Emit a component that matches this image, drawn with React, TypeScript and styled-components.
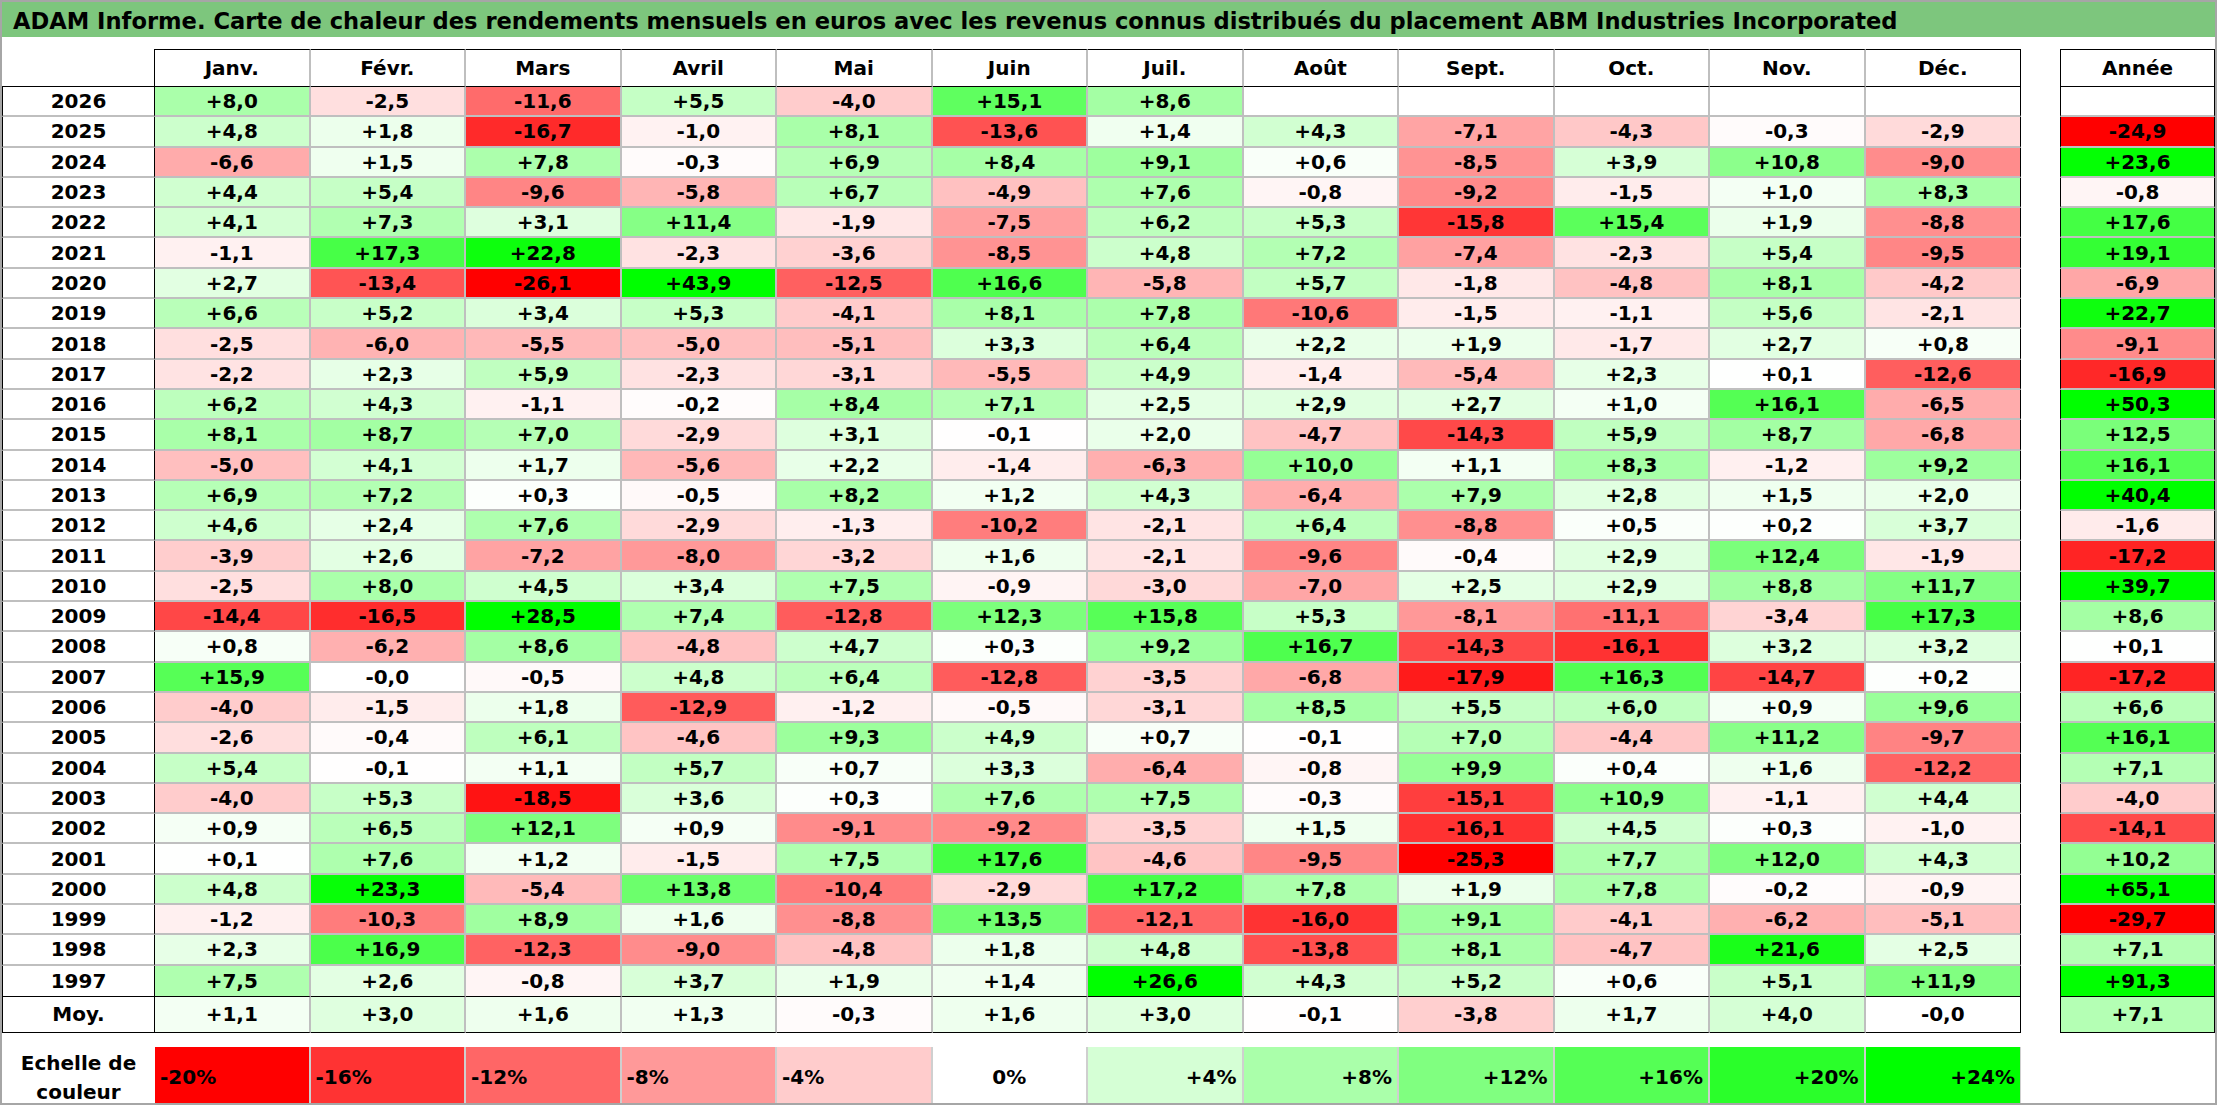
import React from 'react';
import styled, { createGlobalStyle, css } from 'styled-components';

const MONTHS = ['Janv.', 'Févr.', 'Mars', 'Avril', 'Mai', 'Juin', 'Juil.', 'Août', 'Sept.', 'Oct.', 'Nov.', 'Déc.'];

// year | 12 monthly returns ('.' = no data yet) | yearly return
const DATA = `
2026|+8,0 -2,5 -11,6 +5,5 -4,0 +15,1 +8,6 . . . . .|.
2025|+4,8 +1,8 -16,7 -1,0 +8,1 -13,6 +1,4 +4,3 -7,1 -4,3 -0,3 -2,9|-24,9
2024|-6,6 +1,5 +7,8 -0,3 +6,9 +8,4 +9,1 +0,6 -8,5 +3,9 +10,8 -9,0|+23,6
2023|+4,4 +5,4 -9,6 -5,8 +6,7 -4,9 +7,6 -0,8 -9,2 -1,5 +1,0 +8,3|-0,8
2022|+4,1 +7,3 +3,1 +11,4 -1,9 -7,5 +6,2 +5,3 -15,8 +15,4 +1,9 -8,8|+17,6
2021|-1,1 +17,3 +22,8 -2,3 -3,6 -8,5 +4,8 +7,2 -7,4 -2,3 +5,4 -9,5|+19,1
2020|+2,7 -13,4 -26,1 +43,9 -12,5 +16,6 -5,8 +5,7 -1,8 -4,8 +8,1 -4,2|-6,9
2019|+6,6 +5,2 +3,4 +5,3 -4,1 +8,1 +7,8 -10,6 -1,5 -1,1 +5,6 -2,1|+22,7
2018|-2,5 -6,0 -5,5 -5,0 -5,1 +3,3 +6,4 +2,2 +1,9 -1,7 +2,7 +0,8|-9,1
2017|-2,2 +2,3 +5,9 -2,3 -3,1 -5,5 +4,9 -1,4 -5,4 +2,3 +0,1 -12,6|-16,9
2016|+6,2 +4,3 -1,1 -0,2 +8,4 +7,1 +2,5 +2,9 +2,7 +1,0 +16,1 -6,5|+50,3
2015|+8,1 +8,7 +7,0 -2,9 +3,1 -0,1 +2,0 -4,7 -14,3 +5,9 +8,7 -6,8|+12,5
2014|-5,0 +4,1 +1,7 -5,6 +2,2 -1,4 -6,3 +10,0 +1,1 +8,3 -1,2 +9,2|+16,1
2013|+6,9 +7,2 +0,3 -0,5 +8,2 +1,2 +4,3 -6,4 +7,9 +2,8 +1,5 +2,0|+40,4
2012|+4,6 +2,4 +7,6 -2,9 -1,3 -10,2 -2,1 +6,4 -8,8 +0,5 +0,2 +3,7|-1,6
2011|-3,9 +2,6 -7,2 -8,0 -3,2 +1,6 -2,1 -9,6 -0,4 +2,9 +12,4 -1,9|-17,2
2010|-2,5 +8,0 +4,5 +3,4 +7,5 -0,9 -3,0 -7,0 +2,5 +2,9 +8,8 +11,7|+39,7
2009|-14,4 -16,5 +28,5 +7,4 -12,8 +12,3 +15,8 +5,3 -8,1 -11,1 -3,4 +17,3|+8,6
2008|+0,8 -6,2 +8,6 -4,8 +4,7 +0,3 +9,2 +16,7 -14,3 -16,1 +3,2 +3,2|+0,1
2007|+15,9 -0,0 -0,5 +4,8 +6,4 -12,8 -3,5 -6,8 -17,9 +16,3 -14,7 +0,2|-17,2
2006|-4,0 -1,5 +1,8 -12,9 -1,2 -0,5 -3,1 +8,5 +5,5 +6,0 +0,9 +9,6|+6,6
2005|-2,6 -0,4 +6,1 -4,6 +9,3 +4,9 +0,7 -0,1 +7,0 -4,4 +11,2 -9,7|+16,1
2004|+5,4 -0,1 +1,1 +5,7 +0,7 +3,3 -6,4 -0,8 +9,9 +0,4 +1,6 -12,2|+7,1
2003|-4,0 +5,3 -18,5 +3,6 +0,3 +7,6 +7,5 -0,3 -15,1 +10,9 -1,1 +4,4|-4,0
2002|+0,9 +6,5 +12,1 +0,9 -9,1 -9,2 -3,5 +1,5 -16,1 +4,5 +0,3 -1,0|-14,1
2001|+0,1 +7,6 +1,2 -1,5 +7,5 +17,6 -4,6 -9,5 -25,3 +7,7 +12,0 +4,3|+10,2
2000|+4,8 +23,3 -5,4 +13,8 -10,4 -2,9 +17,2 +7,8 +1,9 +7,8 -0,2 -0,9|+65,1
1999|-1,2 -10,3 +8,9 +1,6 -8,8 +13,5 -12,1 -16,0 +9,1 -4,1 -6,2 -5,1|-29,7
1998|+2,3 +16,9 -12,3 -9,0 -4,8 +1,8 +4,8 -13,8 +8,1 -4,7 +21,6 +2,5|+7,1
1997|+7,5 +2,6 -0,8 +3,7 +1,9 +1,4 +26,6 +4,3 +5,2 +0,6 +5,1 +11,9|+91,3
`;

const AVERAGE = {
  months: '+1,1 +3,0 +1,6 +1,3 -0,3 +1,6 +3,0 -0,1 -3,8 +1,7 +4,0 -0,0'.split(' '),
  year: '+7,1',
};

const SCALE = [-20, -16, -12, -8, -4, 0, 4, 8, 12, 16, 20, 24];

type Row = { year: string; months: string[]; total: string };

const rows: Row[] = DATA.trim()
  .split('\n')
  .map((line) => {
    const [year, months, total] = line.split('|');
    return {
      year,
      months: months.split(' ').map((m) => (m === '.' ? '' : m)),
      total: total === '.' ? '' : total,
    };
  });

// red below zero (full at -20), green above (full at +24)
const heatValue = (v: number) => {
  if (v < 0) {
    const c = Math.round(255 * (1 - Math.min(1, -v / 20)));
    return `rgb(255, ${c}, ${c})`;
  }
  const c = Math.round(255 * (1 - Math.min(1, v / 24)));
  return `rgb(${c}, 255, ${c})`;
};

const heat = (s: string) => (s ? heatValue(parseFloat(s.replace(',', '.'))) : '#ffffff');

const BLACK = '1px solid #000';
const GRAY = '2px solid #bfbfbf';

const GlobalStyle = createGlobalStyle`
  html, body {
    margin: 0;
    padding: 0;
    background: #fff;
  }
`;

const Page = styled.div`
  width: 2217px;
  height: 1105px;
  box-sizing: border-box;
  border: 2px solid #a6a6a6;
  font-family: 'DejaVu Sans', 'Liberation Sans', sans-serif;
  font-weight: 700;
  color: #000;
  display: flex;
  flex-direction: column;
  overflow: hidden;
`;

const TitleBar = styled.div`
  height: 35px;
  box-sizing: border-box;
  padding: 3px 0 0 11px;
  background: #7dc67d;
  display: flex;
  align-items: center;
  font-size: 22.6px;
  white-space: nowrap;
`;

const Body = styled.div`
  display: flex;
  gap: 39px;
  margin-top: 12px;
`;

const LeftBlock = styled.div`
  display: flex;
  flex-direction: column;
  gap: 14px;
`;

const MonthTable = styled.div`
  display: grid;
  grid-template-columns: 153px repeat(12, 155.5px);
  grid-template-rows: 38px repeat(30, 30.3px) 37px;
`;

const cellBase = css`
  box-sizing: border-box;
  display: flex;
  align-items: center;
  justify-content: center;
  font-size: 20px;
  white-space: nowrap;
`;

const Corner = styled.div`
  border-right: ${BLACK};
  border-bottom: ${BLACK};
`;

const HeadCell = styled.div<{ $end?: boolean }>`
  ${cellBase};
  background: #fff;
  border-top: ${BLACK};
  border-bottom: ${BLACK};
  border-right: ${({ $end }) => ($end ? BLACK : GRAY)};
`;

const YearCell = styled.div<{ $tail?: boolean; $avg?: boolean }>`
  ${cellBase};
  background: #fff;
  border-left: ${BLACK};
  border-right: ${BLACK};
  border-bottom: ${({ $tail }) => ($tail ? 'none' : GRAY)};
  ${({ $avg }) =>
    $avg &&
    css`
      border-top: ${BLACK};
      border-bottom: ${BLACK};
    `}
`;

const ValueCell = styled.div.attrs<{ $bg: string }>(({ $bg }) => ({
  style: { background: $bg },
}))<{ $bg: string; $end?: boolean; $tail?: boolean; $avg?: boolean }>`
  ${cellBase};
  border-right: ${({ $end }) => ($end ? BLACK : GRAY)};
  border-bottom: ${({ $tail }) => ($tail ? 'none' : GRAY)};
  ${({ $avg }) =>
    $avg &&
    css`
      border-top: ${BLACK};
      border-bottom: ${BLACK};
    `}
`;

const AnnualTable = styled.div`
  display: grid;
  grid-template-columns: 155px;
  grid-template-rows: 38px repeat(30, 30.3px) 37px;
  align-self: flex-start;
`;

const AnnualHead = styled.div`
  ${cellBase};
  background: #fff;
  border: ${BLACK};
`;

const AnnualCell = styled.div.attrs<{ $bg: string }>(({ $bg }) => ({
  style: { background: $bg },
}))<{ $bg: string; $tail?: boolean; $avg?: boolean }>`
  ${cellBase};
  border-left: ${BLACK};
  border-right: ${BLACK};
  border-bottom: ${({ $tail }) => ($tail ? 'none' : GRAY)};
  ${({ $avg }) =>
    $avg &&
    css`
      border-top: ${BLACK};
      border-bottom: ${BLACK};
    `}
`;

const ScaleRow = styled.div`
  display: grid;
  grid-template-columns: 153px repeat(12, 155.5px);
  height: 56px;
`;

const ScaleLabel = styled.div`
  display: flex;
  flex-direction: column;
  align-items: center;
  justify-content: center;
  font-size: 20px;
  line-height: 29px;
  padding-top: 2px;
`;

const ScaleCell = styled.div.attrs<{ $bg: string }>(({ $bg }) => ({
  style: { background: $bg },
}))<{ $bg: string; $align: 'flex-start' | 'center' | 'flex-end' }>`
  ${cellBase};
  justify-content: ${({ $align }) => $align};
  padding: 0 5px;
  border-right: 2px solid #cfcfcf;

  &:last-child {
    border-right: 1px solid #cfcfcf;
  }
`;

const scaleText = (v: number) => (v > 0 ? `+${v}%` : `${v}%`);
const scaleAlign = (v: number) => (v < 0 ? 'flex-start' : v === 0 ? 'center' : 'flex-end');

const App: React.FC = () => {
  const last = rows.length - 1;
  return (
    <>
      <GlobalStyle />
      <Page>
        <TitleBar>
          ADAM Informe. Carte de chaleur des rendements mensuels en euros avec les revenus connus distribués du
          placement ABM Industries Incorporated
        </TitleBar>

        <Body>
          <LeftBlock>
            <MonthTable>
              <Corner />
              {MONTHS.map((m, i) => (
                <HeadCell key={m} $end={i === 11}>
                  {m}
                </HeadCell>
              ))}

              {rows.map((row, r) => (
                <React.Fragment key={row.year}>
                  <YearCell $tail={r === last}>{row.year}</YearCell>
                  {row.months.map((v, i) => (
                    <ValueCell key={i} $bg={heat(v)} $end={i === 11} $tail={r === last}>
                      {v}
                    </ValueCell>
                  ))}
                </React.Fragment>
              ))}

              <YearCell $avg>Moy.</YearCell>
              {AVERAGE.months.map((v, i) => (
                <ValueCell key={i} $bg={heat(v)} $end={i === 11} $avg>
                  {v}
                </ValueCell>
              ))}
            </MonthTable>

            <ScaleRow>
              <ScaleLabel>
                <span>Echelle de</span>
                <span>couleur</span>
              </ScaleLabel>
              {SCALE.map((v) => (
                <ScaleCell key={v} $bg={heatValue(v)} $align={scaleAlign(v)}>
                  {scaleText(v)}
                </ScaleCell>
              ))}
            </ScaleRow>
          </LeftBlock>

          <AnnualTable>
            <AnnualHead>Année</AnnualHead>
            {rows.map((row, r) => (
              <AnnualCell key={row.year} $bg={heat(row.total)} $tail={r === last}>
                {row.total}
              </AnnualCell>
            ))}
            <AnnualCell $bg={heat(AVERAGE.year)} $avg>
              {AVERAGE.year}
            </AnnualCell>
          </AnnualTable>
        </Body>
      </Page>
    </>
  );
};

export default App;
